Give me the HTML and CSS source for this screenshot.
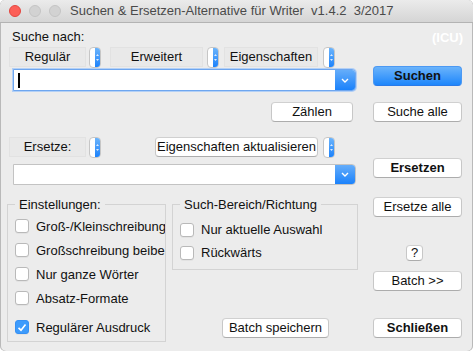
FILE: index.html
```html
<!DOCTYPE html>
<html lang="de">
<head>
  <meta charset="UTF-8">
  <title>Suchen & Ersetzen-Alternative für Writer</title>
  <meta name="viewport" content="width=device-width, initial-scale=1.0">
  <link rel="stylesheet" href="styles.css">
</head>
<body>

  <div class="window">

    <!-- Titelleiste -->
    <div class="titlebar">
      <div class="lights">
        <span class="light close"></span>
        <span class="light"></span>
        <span class="light"></span>
      </div>
      <div class="title">Suchen &amp; Ersetzen-Alternative für Writer  v1.4.2  3/2017</div>
    </div>

    <div class="content">

      <!-- linke Spalte -->
      <div class="main">
        <div class="caption">Suche nach:</div>

        <div class="row mode-row">
          <div class="tag tag-reg">Regulär</div>
          <span class="stepper st-1"><span class="stepper-blue"><svg width="5" height="19" viewBox="0 0 5 19"><path d="M1 8 L2.5 6 L4 8Z M1 11 L2.5 13 L4 11Z" fill="#dbe9fd"/></svg></span></span>
          <div class="tag tag-erw">Erweitert</div>
          <span class="stepper st-2"><span class="stepper-blue"><svg width="5" height="19" viewBox="0 0 5 19"><path d="M1 8 L2.5 6 L4 8Z M1 11 L2.5 13 L4 11Z" fill="#dbe9fd"/></svg></span></span>
          <div class="tag tag-eig">Eigenschaften</div>
          <span class="stepper st-3"><span class="stepper-blue"><svg width="5" height="19" viewBox="0 0 5 19"><path d="M1 8 L2.5 6 L4 8Z M1 11 L2.5 13 L4 11Z" fill="#dbe9fd"/></svg></span></span>
        </div>

        <div class="combo focused">
          <span class="caret"></span>
          <span class="combo-arrow"><svg width="8" height="5" viewBox="0 0 8 5"><path d="M1 1 L4 4 L7 1" fill="none" stroke="#fff" stroke-width="1.4"/></svg></span>
        </div>

        <div class="row count-row">
          <button class="btn btn-count">Zählen</button>
        </div>

        <div class="row replace-row">
          <div class="tag tag-reg">Ersetze:</div>
          <span class="stepper st-1"><span class="stepper-blue"><svg width="5" height="19" viewBox="0 0 5 19"><path d="M1 8 L2.5 6 L4 8Z M1 11 L2.5 13 L4 11Z" fill="#dbe9fd"/></svg></span></span>
          <button class="btn btn-props">Eigenschaften aktualisieren</button>
          <span class="stepper st-3"><span class="stepper-blue"><svg width="5" height="19" viewBox="0 0 5 19"><path d="M1 8 L2.5 6 L4 8Z M1 11 L2.5 13 L4 11Z" fill="#dbe9fd"/></svg></span></span>
        </div>

        <div class="combo combo-replace">
          <span class="combo-arrow"><svg width="8" height="5" viewBox="0 0 8 5"><path d="M1 1 L4 4 L7 1" fill="none" stroke="#fff" stroke-width="1.4"/></svg></span>
        </div>

        <div class="groups">
          <fieldset class="group group-settings">
            <legend>Einstellungen:</legend>
            <div class="check-row"><span class="check"></span>Groß-/Kleinschreibung</div>
            <div class="check-row"><span class="check"></span>Großschreibung beibehalten</div>
            <div class="check-row"><span class="check"></span>Nur ganze Wörter</div>
            <div class="check-row"><span class="check"></span>Absatz-Formate</div>
            <div class="check-row last"><span class="check checked"><svg width="10" height="9" viewBox="0 0 10 9"><path d="M1.5 4.8 L4 7.2 L8.5 1.5" fill="none" stroke="#fff" stroke-width="1.6"/></svg></span>Regulärer Ausdruck</div>
          </fieldset>

          <div class="group-col">
            <fieldset class="group group-range">
              <legend>Such-Bereich/Richtung</legend>
              <div class="check-row"><span class="check"></span>Nur aktuelle Auswahl</div>
              <div class="check-row"><span class="check"></span>Rückwärts</div>
            </fieldset>
            <button class="btn btn-batch-save">Batch speichern</button>
          </div>
        </div>
      </div>

      <!-- rechte Spalte -->
      <div class="side">
        <div class="icu">(ICU)</div>
        <button class="btn default bold b-search">Suchen</button>
        <button class="btn b-search-all">Suche alle</button>
        <button class="btn bold b-replace">Ersetzen</button>
        <button class="btn b-replace-all">Ersetze alle</button>
        <button class="btn b-help">?</button>
        <button class="btn b-batch">Batch &gt;&gt;</button>
        <button class="btn bold b-close">Schließen</button>
      </div>

    </div>
  </div>

</body>
</html>
```

FILE: styles.css
```css
html {
  background-color: #ffffff;
}

body {
  margin: 0;
  padding: 0;
  font-family: "Liberation Sans", Arial, sans-serif;
  font-size: 13px;
  color: #111;
}

.window {
  width: 473px;
  height: 351px;
  background-color: #ececec;
  border-radius: 5px;
  box-shadow: inset 1px 0 #b9b9b9, inset -1px 0 #b9b9b9;
  overflow: hidden;
}

/* Titelleiste */
.titlebar {
  display: flex;
  align-items: center;
  height: 22px;
  background: linear-gradient(#ebebeb, #d5d5d5);
  border-bottom: 1px solid #b3b3b3;
  border-radius: 5px 5px 0 0;
}

.lights {
  display: flex;
  gap: 8px;
  margin-left: 9px;
}

.light {
  width: 10px;
  height: 10px;
  border-radius: 50%;
  background-color: #d2d2d2;
  border: 1px solid #c4c4c4;
}

.light.close {
  background-color: #fc5f57;
  border-color: #e2463f;
}

.title {
  margin-left: 9px;
  white-space: pre;
  color: #4a4a4a;
  line-height: 22px;
}

/* Inhalt */
.content {
  display: flex;
  padding-left: 7px;
}

.main {
  width: 352px;
  display: flex;
  flex-direction: column;
}

.caption {
  margin-top: 6px;
  padding-left: 5px;
  line-height: 15px;
}

.row {
  display: flex;
  align-items: flex-start;
}

.mode-row {
  margin-top: 3px;
}

.tag {
  box-sizing: border-box;
  height: 20px;
  line-height: 18px;
  text-align: center;
  background-color: #e9e9e9;
  border: 1px solid #e2e2e2;
}

.tag-reg {
  width: 77px;
  margin-left: 2px;
}

.tag-erw {
  width: 93px;
  margin-left: 9px;
}

.tag-eig {
  width: 94px;
  margin-left: 5px;
}

.stepper {
  box-sizing: border-box;
  display: flex;
  justify-content: flex-end;
  width: 12px;
  height: 21px;
  background-color: white;
  border: 1px solid #c6c6c6;
  border-radius: 4px;
  overflow: hidden;
}

.stepper-blue {
  width: 5px;
  height: 19px;
  background: linear-gradient(#6cb4fb, #1c82fb);
}

.stepper-blue svg {
  display: block;
}

.st-1 {
  margin-left: 3px;
}

.st-2 {
  margin-left: 4px;
}

.st-3 {
  margin-left: 5px;
}

/* Kombinationsfeld */
.combo {
  box-sizing: border-box;
  display: flex;
  align-items: center;
  justify-content: space-between;
  width: 343px;
  margin-left: 6px;
  background-color: white;
  border: 1px solid #c3c3c3;
  border-radius: 0 4px 4px 0;
}

.combo.focused {
  margin-top: 1px;
  height: 22px;
  border: 1px solid #6ea6ef;
  box-shadow: 0 0 0 1px #b3d0f6;
}

.combo-replace {
  margin-top: 6px;
  height: 21px;
  justify-content: flex-end;
}

.caret {
  width: 2px;
  height: 15px;
  margin-left: 4px;
  background-color: black;
}

.combo-arrow {
  display: flex;
  align-items: center;
  justify-content: center;
  align-self: stretch;
  width: 20px;
  background: linear-gradient(#65adfa, #1b82fb);
  border-radius: 0 3px 3px 0;
}

/* Schaltflächen */
.btn {
  box-sizing: border-box;
  height: 20px;
  padding: 0;
  font-family: "Liberation Sans", Arial, sans-serif;
  font-size: 13px;
  line-height: 18px;
  color: #111;
  white-space: nowrap;
  overflow: hidden;
  background-color: white;
  border: 1px solid #c7c7c7;
  border-top-color: #d0d0d0;
  border-bottom-color: #acacac;
  border-radius: 4px;
}

.btn.bold {
  font-weight: bold;
}

.btn.default {
  background: linear-gradient(#6ab3fb, #1e86fb);
  border-color: #4c99f3;
  border-bottom-color: #2a7ae8;
}

.count-row {
  margin-top: 11px;
  justify-content: flex-end;
  padding-right: 6px;
}

.btn-count {
  width: 82px;
}

.replace-row {
  margin-top: 15px;
}

.btn-props {
  width: 163px;
  margin-left: 54px;
}

/* Gruppen */
.groups {
  display: flex;
  align-items: flex-start;
  margin-top: 12px;
}

.group {
  margin: 0;
  min-width: 0;
  border: 1px solid #d3d3d3;
  overflow: hidden;
}

.group legend {
  padding: 0 4px;
  line-height: 15px;
}

.group-settings {
  box-sizing: border-box;
  width: 159px;
  padding: 2px 7px 2px;
}

.group-col {
  display: flex;
  flex-direction: column;
  align-items: flex-start;
  margin-left: 6px;
  width: 186px;
}

.group-range {
  box-sizing: border-box;
  width: 186px;
  padding: 6px 7px 5px;
}

.check-row {
  display: flex;
  align-items: center;
  gap: 7px;
  height: 24px;
  white-space: nowrap;
}

.group-range .check-row {
  height: 23px;
}

.check-row.last {
  margin-top: 5px;
}

.check {
  box-sizing: border-box;
  flex: none;
  display: flex;
  align-items: center;
  justify-content: center;
  width: 14px;
  height: 14px;
  background-color: white;
  border: 1px solid #b9b9b9;
  border-radius: 3px;
  box-shadow: 0 1px 0 rgba(0,0,0,0.04);
}

.check.checked {
  background-color: #3d9bfc;
  border-color: #3590f4;
}

.btn-batch-save {
  width: 107px;
  margin-top: 48px;
  margin-left: 50px;
}

/* rechte Spalte */
.side {
  display: flex;
  flex-direction: column;
  align-items: flex-start;
  width: 90px;
  margin-left: 14px;
}

.side .btn {
  width: 89px;
}

.icu {
  align-self: stretch;
  margin-top: 7px;
  text-align: right;
  line-height: 15px;
  font-weight: bold;
  color: white;
}

.b-search {
  margin-top: 21px;
}

.b-search-all {
  margin-top: 16px;
}

.b-replace {
  margin-top: 36px;
}

.b-replace-all {
  margin-top: 19px;
}

.side .b-help {
  width: 17px;
  height: 16px;
  line-height: 14px;
  margin-top: 28px;
  margin-left: 33px;
}

.b-batch {
  margin-top: 10px;
}

.b-close {
  margin-top: 27px;
}
```
